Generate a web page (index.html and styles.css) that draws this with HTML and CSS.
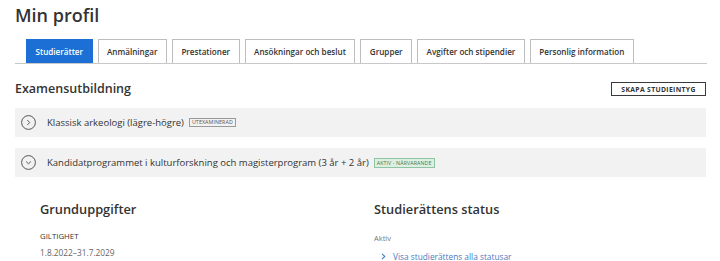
FILE: index.html
```html
<!DOCTYPE html>
<html lang="sv">
<head>
<meta charset="utf-8">
<link rel="stylesheet" href="styles.css">
</head>
<body>
<div class="page">
  <h1 class="title">Min profil</h1>
  <nav class="tabs">
    <a class="tab active">Studierätter</a>
    <a class="tab">Anmälningar</a>
    <a class="tab">Prestationer</a>
    <a class="tab">Ansökningar och beslut</a>
    <a class="tab">Grupper</a>
    <a class="tab">Avgifter och stipendier</a>
    <a class="tab">Personlig information</a>
  </nav>
  <div class="section-head">
    <h2 class="section-title">Examensutbildning</h2>
    <button class="btn">SKAPA STUDIEINTYG</button>
  </div>
  <div class="acc">
    <span class="acc-icon">
      <svg width="15" height="15" viewBox="0 0 15 15"><circle cx="7.5" cy="7.5" r="6.9" fill="none" stroke="#555" stroke-width="1"/><path d="M6.4 5.1 L8.7 7.5 L6.4 9.9" fill="none" stroke="#555" stroke-width="1"/></svg>
    </span>
    <span class="acc-text">Klassisk arkeologi (lägre-högre)</span>
    <span class="badge badge-grey">UTEXAMINERAD</span>
  </div>
  <div class="acc">
    <span class="acc-icon">
      <svg width="15" height="15" viewBox="0 0 15 15"><circle cx="7.5" cy="7.5" r="6.9" fill="none" stroke="#555" stroke-width="1"/><path d="M5.1 6.5 L7.5 8.8 L9.9 6.5" fill="none" stroke="#555" stroke-width="1"/></svg>
    </span>
    <span class="acc-text">Kandidatprogrammet i kulturforskning och magisterprogram (3 år + 2 år)</span>
    <span class="badge badge-green">AKTIV - NÄRVARANDE</span>
  </div>
  <div class="details">
    <div class="col">
      <h3 class="col-title">Grunduppgifter</h3>
      <div class="label">GILTIGHET</div>
      <div class="value">1.8.2022–31.7.2029</div>
    </div>
    <div class="col">
      <h3 class="col-title">Studierättens status</h3>
      <div class="status">Aktiv</div>
      <a class="link"><svg width="5" height="7" viewBox="0 0 5 7"><path d="M1 0.8 L3.8 3.5 L1 6.2" fill="none" stroke="#4a7bbf" stroke-width="1.1"/></svg><span>Visa studierättens alla statusar</span></a>
    </div>
  </div>
</div>
</body>
</html>
```

FILE: styles.css
```css
* { box-sizing: border-box; }
html, body { margin: 0; padding: 0; background: #fff; }
body { font-family: "Open Sans", "Noto Sans", sans-serif; color: #333; }
.page { padding: 0 14px 0 15px; }
.title { margin: 0; padding-top: 3px; font-size: 18px; line-height: 24px; font-weight: 600; color: #333; }
.tabs { display: flex; gap: 5px; padding-left: 11px; margin-top: 12px; border-bottom: 1px solid #c8c8c8; margin-right: -1px; }
.tab { display: flex; align-items: center; justify-content: center; height: 24px; padding: 0 8.5px 1px; border: 1px solid #bdbdbd; border-bottom: none; font-size: 8.1px; font-weight: 600; color: #333; white-space: nowrap; }
.tab.active { background: #1c6fd4; border-color: #1c6fd4; color: #fff; }
.section-head { display: flex; justify-content: space-between; align-items: center; height: 18px; margin-top: 16px; }
.section-title { margin: 0; font-size: 12.5px; line-height: 18px; font-weight: 600; color: #333; }
.btn { background: #fff; border: 1px solid #3a3a3a; height: 14px; width: 95px; padding: 0; font-family: inherit; font-size: 6.8px; font-weight: 700; letter-spacing: 0.35px; color: #333; }
.acc { display: flex; align-items: center; height: 29px; margin-top: 10px; background: #f2f2f2; padding-left: 6px; }
.acc + .acc { margin-top: 11px; }
.acc-icon { display: flex; width: 15px; height: 15px; }
.acc-text { margin-left: 11px; font-size: 9.5px; color: #333; }
.badge { margin-left: 5px; font-size: 5.3px; padding: 0 2px; line-height: 7px; letter-spacing: 0.1px; }
.badge-grey { border: 1px solid #9a9a9a; color: #555; }
.badge-green { border: 1px solid #8fc4a2; background: #ddefe3; color: #3d7a52; line-height: 8px; }
.details { display: grid; grid-template-columns: 334px 1fr; padding-left: 25px; margin-top: 23px; }
.col-title { margin: 0; font-size: 12.8px; line-height: 18px; font-weight: 600; color: #333; }
.label { margin-top: 13px; font-size: 7.8px; color: #333; line-height: 10px; }
.value { margin-top: 6px; font-size: 8.3px; color: #666; line-height: 11px; }
.status { margin-top: 15px; font-size: 7.5px; line-height: 10px; color: #777; }
.link { display: flex; align-items: center; gap: 7px; margin-top: 8px; padding-left: 7px; font-size: 8.3px; line-height: 11px; color: #4a7bbf; }
```
